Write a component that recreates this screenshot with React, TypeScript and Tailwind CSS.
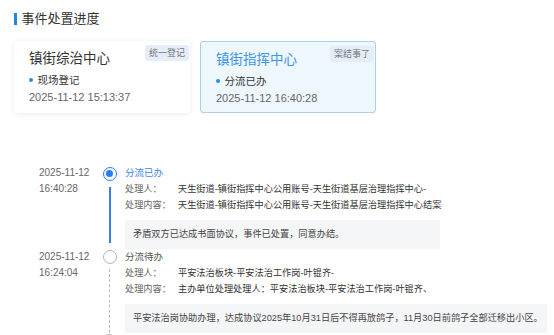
const FONT = { fontFamily: '"Liberation Sans", "Noto Sans CJK SC", sans-serif' };

type Card = { title: string; badge: string; step: string; time: string; active?: boolean };

const cards: Card[] = [
  { title: '镇街综治中心', badge: '统一登记', step: '现场登记', time: '2025-11-12 15:13:37' },
  { title: '镇街指挥中心', badge: '案结事了', step: '分流已办', time: '2025-11-12 16:40:28', active: true },
];

type Step = {
  date: string;
  time: string;
  status: string;
  handler: string;
  content: string;
  note: string;
  done?: boolean;
  noteWidth: string;
};

const steps: Step[] = [
  {
    date: '2025-11-12',
    time: '16:40:28',
    status: '分流已办',
    handler: '天生街道-镇街指挥中心公用账号-天生街道基层治理指挥中心-',
    content: '天生街道-镇街指挥中心公用账号-天生街道基层治理指挥中心结案',
    note: '矛盾双方已达成书面协议，事件已处置，同意办结。',
    done: true,
    noteWidth: 'w-[315px]',
  },
  {
    date: '2025-11-12',
    time: '16:24:04',
    status: '分流待办',
    handler: '平安法治板块-平安法治工作岗-叶锟齐-',
    content: '主办单位处理处理人：平安法治板块-平安法治工作岗-叶锟齐、',
    note: '平安法治岗协助办理，达成协议2025年10月31日后不得再放鸽子，11月30日前鸽子全部迁移出小区。',
    noteWidth: 'w-[422px]',
  },
];

function StageCard({ card }: { card: Card }) {
  return (
    <div
      className={
        card.active
          ? 'relative h-[72px] w-[176px] rounded-[3px] border border-[#a9cff2] bg-[#eef6fe] pl-[15px]'
          : 'relative h-[72px] w-[176px] rounded-[3px] bg-white pl-[15px] shadow-[0_1px_6px_rgba(0,0,0,0.08)]'
      }
    >
      <span className="absolute right-[1px] top-[4px] rounded-[3px] bg-[#e5edf7] px-[4px] text-[9px] leading-[16px] text-[#777]">
        {card.badge}
      </span>
      <div
        className={
          card.active
            ? 'pt-[9px] text-[13.5px] leading-[18px] text-[#3d95e8]'
            : 'pt-[9px] text-[13.5px] leading-[18px] text-[#333]'
        }
      >
        {card.title}
      </div>
      <div className="mt-[5px] flex items-center gap-[5px] text-[10.5px] leading-[14px] text-[#333]">
        <span className="h-[3.5px] w-[3.5px] rounded-full bg-[#2d8cf0]" />
        {card.step}
      </div>
      <div className="mt-[3px] text-[11px] leading-[14px] text-[#666]">{card.time}</div>
    </div>
  );
}

function TimelineItem({ step, last }: { step: Step; last: boolean }) {
  return (
    <div className="flex">
      <div className="w-[63px] text-[10px] leading-[16px] text-[#666]">
        <div>{step.date}</div>
        <div>{step.time}</div>
      </div>
      <div className="flex w-[15px] flex-col items-center">
        {step.done ? (
          <div className="mt-[1.5px] flex h-[14px] w-[14px] items-center justify-center rounded-full border-[1.5px] border-[#2a7cf0] bg-white">
            <div className="h-[7px] w-[7px] rounded-full bg-[#2a7cf0]" />
          </div>
        ) : (
          <div className="mt-[1px] h-[14px] w-[14px] rounded-full border-[1.5px] border-[#b5b5b5] bg-white" />
        )}
        {step.done ? (
          <div className="mb-[6px] mt-[6px] w-[2px] flex-1 bg-[#3b7fe6]" />
        ) : (
          <div className={last ? 'mt-[5px] w-0 flex-1 border-l border-dashed border-[#bbb]' : 'mt-[5px] w-0 flex-1 border-l border-dashed border-[#bbb]'} />
        )}
      </div>
      <div className="ml-[8px] flex-1">
        <div
          className={
            step.done
              ? 'text-[9.5px] leading-[16px] text-[#3d86ee]'
              : 'text-[9.5px] leading-[16px] text-[#555]'
          }
        >
          {step.status}
        </div>
        <div className="flex text-[9.2px] leading-[16px]">
          <span className="w-[53px] text-[#666]">处理人：</span>
          <span className="text-[#333]">{step.handler}</span>
        </div>
        <div className="flex text-[9.2px] leading-[16px]">
          <span className="w-[53px] text-[#666]">处理内容：</span>
          <span className="text-[#333]">{step.content}</span>
        </div>
        <div
          className={`mt-[7px] h-[29px] ${step.noteWidth} bg-[#f4f5f7] pl-[8px] text-[9.2px] leading-[29px] text-[#444]`}
        >
          {step.note}
        </div>
      </div>
    </div>
  );
}

export default function App() {
  return (
    <div className="h-[335px] w-[554px] overflow-hidden bg-white" style={FONT}>
      {/* header */}
      <div className="flex items-center pl-[14px] pt-[10px]">
        <span className="h-[12px] w-[2.5px] bg-[#1e88e5]" />
        <span className="ml-[5px] text-[13px] leading-[18px] text-[#333]">事件处置进度</span>
      </div>

      {/* stage cards */}
      <div className="mt-[13px] flex gap-[10px] pl-[14px]">
        {cards.map((c) => (
          <StageCard key={c.title} card={c} />
        ))}
      </div>

      {/* timeline */}
      <div className="mt-[52px] pl-[39px]">
        {steps.map((s, i) => (
          <TimelineItem key={s.time} step={s} last={i === steps.length - 1} />
        ))}
        <div className="ml-[63px] mt-[1px] h-[14px] w-[14px] rounded-full border-[1.5px] border-[#b5b5b5] bg-white" />
      </div>
    </div>
  );
}
